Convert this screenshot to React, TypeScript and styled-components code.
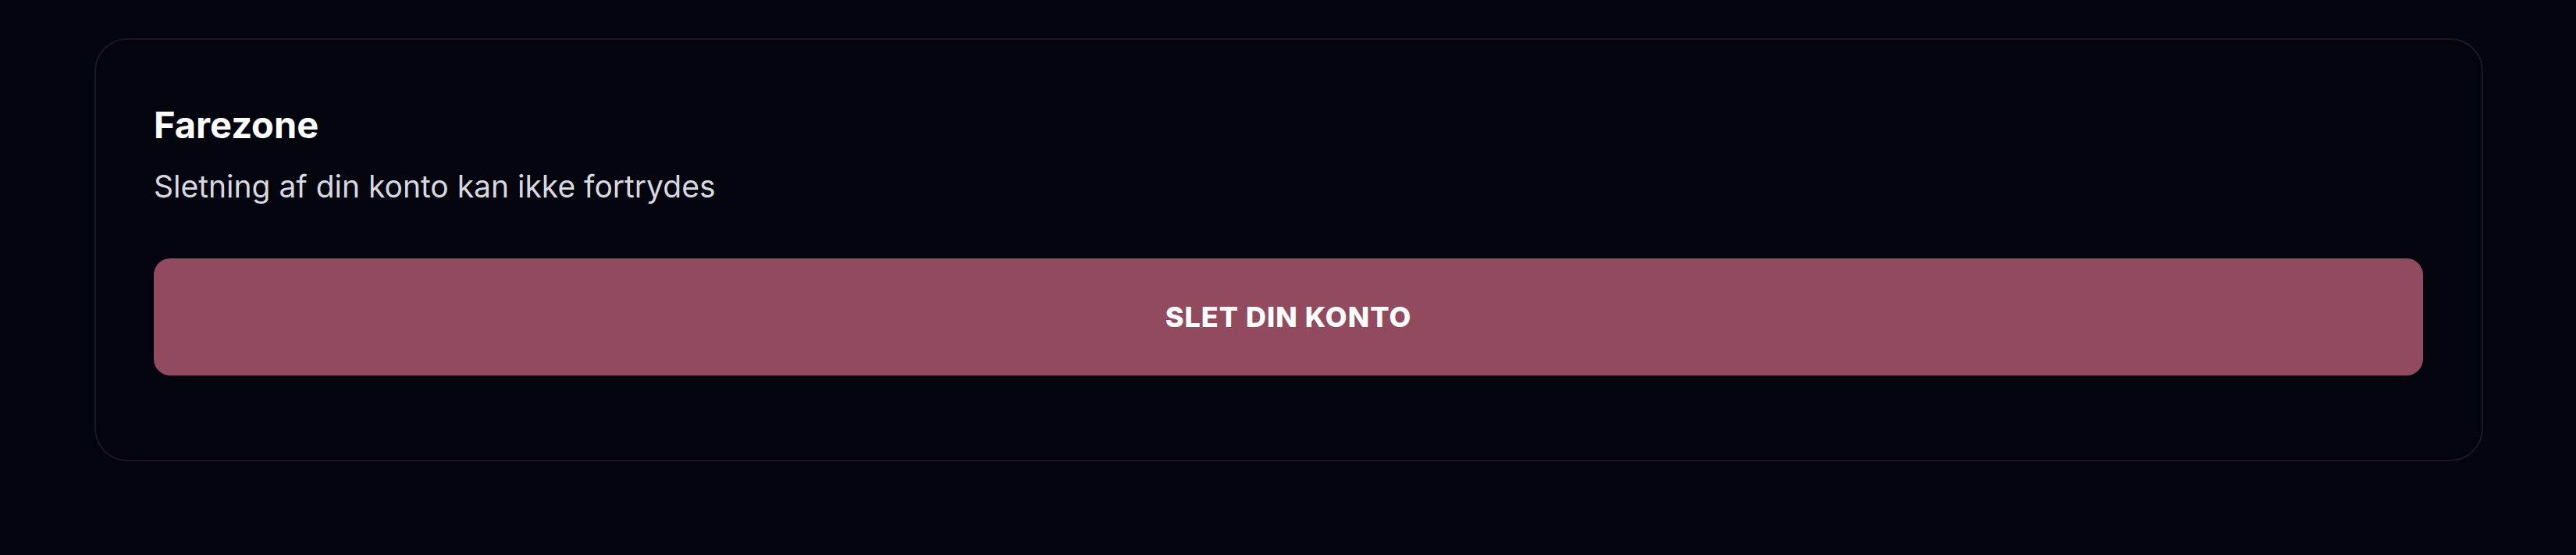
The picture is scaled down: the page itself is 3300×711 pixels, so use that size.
import React from 'react';
import styled, { createGlobalStyle } from 'styled-components';

const GlobalStyle = createGlobalStyle`
  html, body {
    margin: 0;
    padding: 0;
    background: #03050e;
  }
  body {
    font-family: Inter, "Noto Sans", sans-serif;
  }
`;

const Page = styled.main`
  padding: 49px 119px 0 121px;
`;

const Card = styled.section`
  border: 2px solid #21161f;
  border-radius: 42px;
  background: #03040e;
  padding: 80px 75px 108px 74px;
`;

const Title = styled.h2`
  margin: 0;
  color: #ffffff;
  font-size: 47px;
  line-height: 1.25;
  font-weight: 700;
`;

const Text = styled.p`
  margin: 20px 0 0;
  color: #d8d8e0;
  font-size: 39px;
  line-height: 1.5;
  font-weight: 400;
`;

const DangerButton = styled.button`
  display: flex;
  align-items: center;
  justify-content: center;
  width: 100%;
  height: 150px;
  margin-top: 63px;
  border: none;
  border-radius: 21px;
  background: #924a5f;
  color: #ffffff;
  font-family: Inter, "Noto Sans", sans-serif;
  font-size: 36px;
  font-weight: 800;
  letter-spacing: 1px;
  text-transform: uppercase;
  cursor: pointer;
`;

const App: React.FC = () => {
  return (
    <>
      <GlobalStyle />
      <Page>
        <Card>
          <Title>Farezone</Title>
          <Text>Sletning af din konto kan ikke fortrydes</Text>
          <DangerButton>Slet din konto</DangerButton>
        </Card>
      </Page>
    </>
  );
};

export default App;
